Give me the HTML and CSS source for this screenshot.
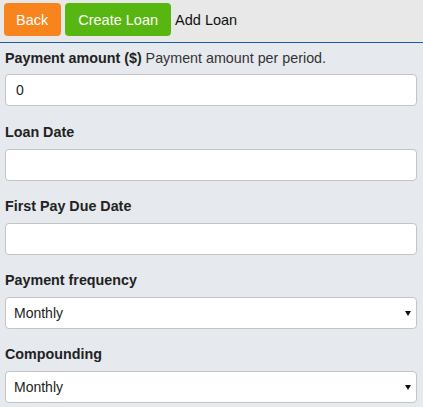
FILE: index.html
```html
<!DOCTYPE html>
<html lang="en">
<head>
  <meta charset="UTF-8" />
  <title>Add Loan</title>
  <link rel="stylesheet" href="styles.css">
</head>
<body>

  <div class="topbar">
    <button class="btn btn-back">Back</button>
    <button class="btn btn-create">Create Loan</button>
    <span class="titulo">Add Loan</span>
  </div>

  <form class="form">
    <div class="campo">
      <label><b>Payment amount ($)</b> Payment amount per period.</label>
      <input type="text" value="0" />
    </div>

    <div class="campo">
      <label><b>Loan Date</b></label>
      <input type="text" />
    </div>

    <div class="campo">
      <label><b>First Pay Due Date</b></label>
      <input type="text" />
    </div>

    <div class="campo">
      <label><b>Payment frequency</b></label>
      <div class="select-wrap">
        <select>
          <option>Monthly</option>
        </select>
      </div>
    </div>

    <div class="campo">
      <label><b>Compounding</b></label>
      <div class="select-wrap">
        <select>
          <option>Monthly</option>
        </select>
      </div>
    </div>
  </form>

</body>
</html>
```

FILE: styles.css
```css
body {
  margin: 0;
  padding: 0;
  background: #e6e9ed;
  font-family: "Liberation Sans", Arial, sans-serif;
  font-size: 14px;
  color: #333;
  overflow: hidden;
}

/* Barra do topo */
.topbar {
  display: flex;
  align-items: center;
  gap: 4px;
  height: 43px;
  padding: 0 4px;
  box-sizing: border-box;
  background: #e8e8e8;
  border-bottom: 1px solid #1c5cb0;
}

.btn {
  height: 33px;
  padding: 0 12px;
  margin-top: -3px;
  border: none;
  border-radius: 4px;
  color: #fff;
  font-family: inherit;
  font-size: 14.5px;
  cursor: pointer;
}

.btn-back {
  background: #f7841c;
  padding: 0 13px 0 12px;
}

.btn-create {
  background: #57b60f;
  padding: 0 13px;
}

.titulo {
  margin-top: -3px;
  color: #111;
  font-size: 14.5px;
}

/* Formulário */
.form {
  padding: 7px 6px 0 5px;
}

.campo {
  margin-bottom: 17px;
}

.campo label {
  display: block;
  font-size: 14.3px;
  line-height: 16px;
  margin-bottom: 9px;
  color: #333;
}

.campo:first-child label {
  margin-bottom: 8px;
}

.campo:first-child {
  margin-bottom: 18px;
}

.campo label b {
  color: #222;
}

.campo input,
.campo select {
  display: block;
  width: 100%;
  height: 32px;
  box-sizing: border-box;
  padding: 0 10px;
  border: 1px solid #c4c4c4;
  border-radius: 4px;
  background: #fff;
  font-family: inherit;
  font-size: 14px;
  color: #222;
}

.select-wrap {
  position: relative;
}

.campo select {
  appearance: none;
  padding-left: 8px;
}

.select-wrap::after {
  content: "";
  position: absolute;
  right: 6px;
  top: 14px;
  border-left: 3px solid transparent;
  border-right: 3px solid transparent;
  border-top: 5px solid #111;
  pointer-events: none;
}
```
